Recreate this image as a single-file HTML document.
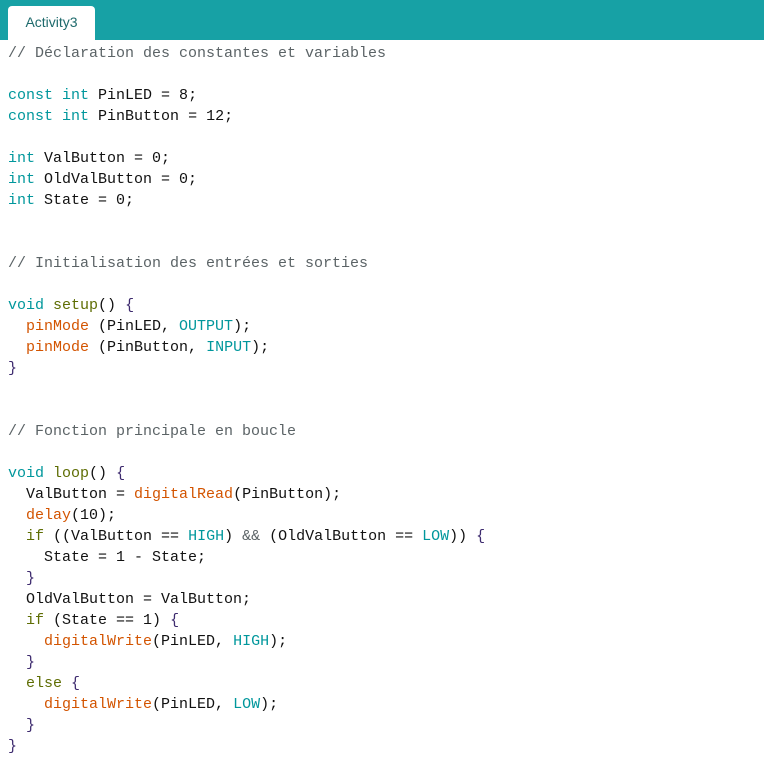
<!DOCTYPE html><html><head><style>
body{margin:0;width:764px;height:760px;background:#fff;overflow:hidden}
.hdr{height:40px;background:#17a1a5;position:relative}
.tab{position:absolute;left:8px;top:6px;width:87px;height:34px;background:#fff;border-radius:4px 4px 0 0;font:14px "Liberation Sans",sans-serif;color:#1e6a6c;line-height:32px;text-align:center}
pre{margin:0;padding:3px 0 0 8px;font:15px/21px "Liberation Mono",monospace;color:#111}
.c{color:#5b6366}.k{color:#00979c}.o{color:#5e6d03}.f{color:#d35400}.p{color:#3d2a6e}
</style></head><body>
<div class="hdr"><div class="tab">Activity3</div></div>
<pre><span class="c">// Déclaration des constantes et variables</span>

<span class="k">const</span> <span class="k">int</span> PinLED = 8;
<span class="k">const</span> <span class="k">int</span> PinButton = 12;

<span class="k">int</span> ValButton = 0;
<span class="k">int</span> OldValButton = 0;
<span class="k">int</span> State = 0;


<span class="c">// Initialisation des entrées et sorties</span>

<span class="k">void</span> <span class="o">setup</span>() <span class="p">{</span>
  <span class="f">pinMode</span> (PinLED, <span class="k">OUTPUT</span>);
  <span class="f">pinMode</span> (PinButton, <span class="k">INPUT</span>);
<span class="p">}</span>


<span class="c">// Fonction principale en boucle</span>

<span class="k">void</span> <span class="o">loop</span>() <span class="p">{</span>
  ValButton = <span class="f">digitalRead</span>(PinButton);
  <span class="f">delay</span>(10);
  <span class="o">if</span> ((ValButton == <span class="k">HIGH</span>) <span class="c">&amp;&amp;</span> (OldValButton == <span class="k">LOW</span>)) <span class="p">{</span>
    State = 1 - State;
  <span class="p">}</span>
  OldValButton = ValButton;
  <span class="o">if</span> (State == 1) <span class="p">{</span>
    <span class="f">digitalWrite</span>(PinLED, <span class="k">HIGH</span>);
  <span class="p">}</span>
  <span class="o">else</span> <span class="p">{</span>
    <span class="f">digitalWrite</span>(PinLED, <span class="k">LOW</span>);
  <span class="p">}</span>
<span class="p">}</span></pre>
</body></html>
